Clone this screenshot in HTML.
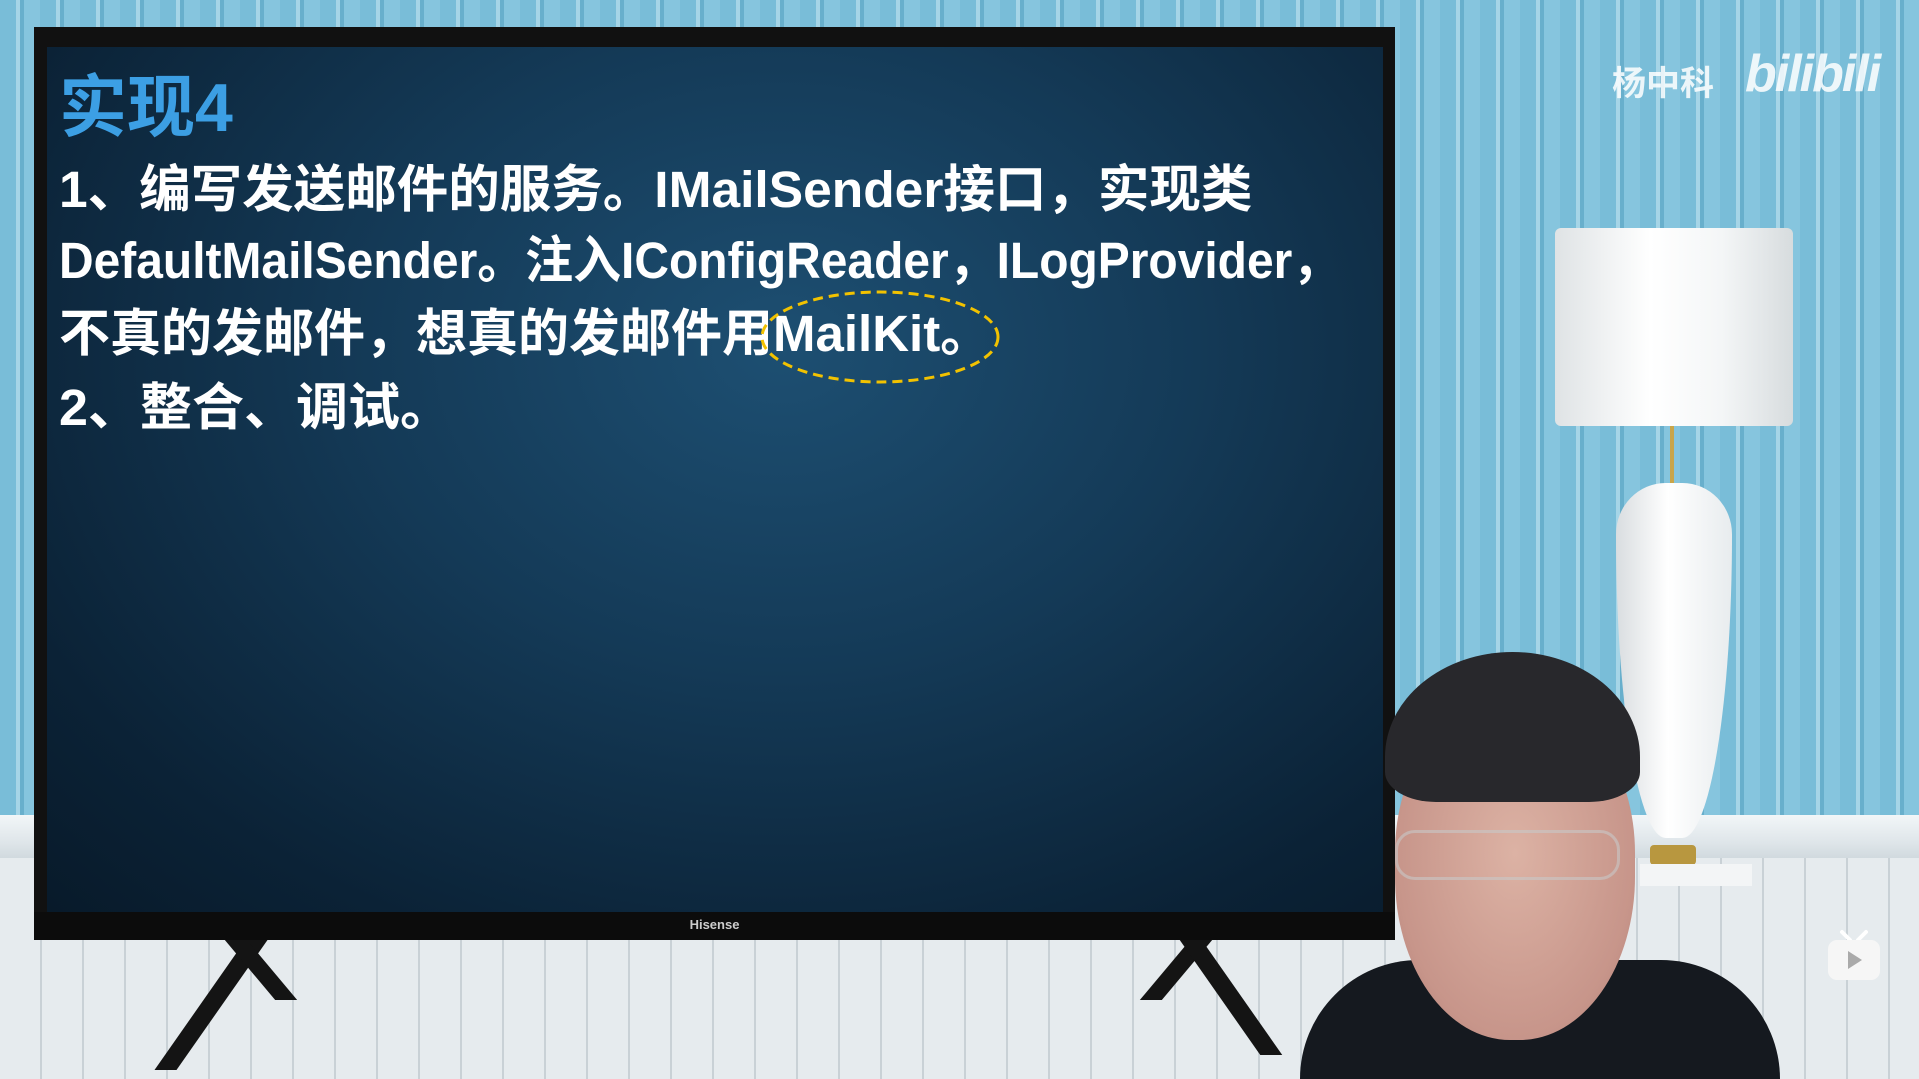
<!DOCTYPE html>
<html style="width:1919px;height:1079px;overflow:hidden"><head><meta charset="utf-8"><style>
*{margin:0;padding:0;box-sizing:border-box}
body{width:1919px;height:1079px;overflow:hidden;position:relative;background:#e6ebee;font-family:"Liberation Sans","Noto Sans CJK SC",sans-serif}
.wall{position:absolute;left:0;top:0;width:1919px;height:820px;background:repeating-linear-gradient(90deg,#79bdd8 0 16px,#a6d5e7 16px 20px,#68afcc 20px 24px,#86c5de 24px 40px)}
.base{position:absolute;left:0;top:815px;width:1919px;height:45px;background:linear-gradient(#f2f6f8,#dfe6ea 60%,#cfd8dd)}
.floor{position:absolute;left:0;top:858px;width:1919px;height:221px;background:repeating-linear-gradient(90deg,#e6ebee 0 40px,#c9d1d6 40px 42px),#e3e8eb}
.tv{position:absolute;left:34px;top:27px;width:1361px;height:913px;background:#111}
.screen{position:absolute;left:47px;top:47px;width:1336px;height:865px;background:radial-gradient(ellipse at 55% 35%,#1d4f72 0%,#143a57 40%,#0b2236 80%,#081a2a 100%)}
.bez{position:absolute;left:34px;top:912px;width:1361px;height:28px;background:#0c0c0c;color:#ccc;font-size:13px;font-weight:bold;text-align:center;line-height:26px}
.t{position:absolute;left:59px;color:#fff;font-weight:bold;font-size:51px;white-space:nowrap;transform-origin:0 50%;line-height:60px}
.leg{position:absolute;background:#141414}
</style></head><body>
<div class="wall"></div>
<div class="base"></div>
<div class="floor"></div>
<!-- lamp -->
<div style="position:absolute;left:1555px;top:228px;width:238px;height:198px;background:linear-gradient(90deg,#dfe3e5,#fff 40%,#f4f6f7 70%,#d7dcde);border-radius:6px"></div>
<div style="position:absolute;left:1670px;top:426px;width:4px;height:60px;background:#c9a54a"></div>
<div style="position:absolute;left:1616px;top:483px;width:116px;height:355px;background:linear-gradient(90deg,#d9dde0,#fff 45%,#e8ecee);border-radius:58px 58px 50% 50%/60px 60px 100% 100%"></div>
<div style="position:absolute;left:1650px;top:845px;width:46px;height:20px;background:#b8973f;border-radius:4px"></div>
<div style="position:absolute;left:1640px;top:864px;width:112px;height:22px;background:#f3f5f6"></div>
<!-- watermark -->
<div style="position:absolute;left:1612px;top:56px;color:rgba(255,255,255,.85);font-size:34px;font-weight:bold">杨中科</div>
<div style="position:absolute;left:1745px;top:44px;color:rgba(255,255,255,.85);font-size:52px;font-weight:bold;font-style:italic;letter-spacing:-2px">bilibili</div>
<!-- tv -->
<div class="tv"></div>
<div class="screen"></div>
<div class="bez">Hisense</div>
<div class="leg" style="left:200px;top:940px;width:22px;height:130px;transform:skewX(-35deg)"></div>
<div class="leg" style="left:250px;top:940px;width:22px;height:60px;transform:skewX(40deg)"></div>
<div class="leg" style="left:1165px;top:940px;width:22px;height:60px;transform:skewX(-40deg)"></div>
<div class="leg" style="left:1220px;top:940px;width:22px;height:115px;transform:skewX(35deg)"></div>
<div style="position:absolute;left:59px;top:68px;color:#3c9fe4;font-weight:bold;font-size:68px;line-height:80px">实现4</div>
<div class="t" style="top:160px;transform:scaleX(1.01)">1、编写发送邮件的服务。IMailSender接口，实现类</div>
<div class="t" style="top:231px;transform:scaleX(.94)">DefaultMailSender。注入IConfigReader，ILogProvider，</div>
<div class="t" style="top:304px;transform:scaleX(1.0)">不真的发邮件，想真的发邮件用MailKit。</div>
<div class="t" style="top:378px;transform:scaleX(1.02)">2、整合、调试。</div>
<svg style="position:absolute;left:755px;top:285px" width="250" height="105"><ellipse cx="125" cy="52" rx="118" ry="45" fill="none" stroke="#f2c200" stroke-width="3" stroke-dasharray="10 6"/></svg>
<!-- person -->
<div style="position:absolute;left:1300px;top:960px;width:480px;height:119px;background:#15191f;border-radius:200px 200px 0 0"></div>
<div style="position:absolute;left:1395px;top:700px;width:240px;height:340px;background:radial-gradient(ellipse at 50% 45%,#dcb2a4,#c7958a 70%,#a9786e);border-radius:45% 45% 48% 48%"></div>
<div style="position:absolute;left:1385px;top:652px;width:255px;height:150px;background:#28282c;border-radius:50% 50% 20% 20%/70% 70% 20% 20%"></div>
<div style="position:absolute;left:1395px;top:830px;width:225px;height:50px;border:3px solid rgba(200,200,200,.6);border-radius:20px"></div>
<!-- tv icon -->
<svg style="position:absolute;left:1826px;top:928px" width="56" height="54" viewBox="0 0 56 54"><path d="M16 4l8 8M40 4l-8 8" stroke="#fff" stroke-width="4" stroke-linecap="round"/><rect x="2" y="12" width="52" height="40" rx="9" fill="#f6f6f6"/><path d="M22 23v18l14-9z" fill="#aaa"/></svg>
</body></html>
